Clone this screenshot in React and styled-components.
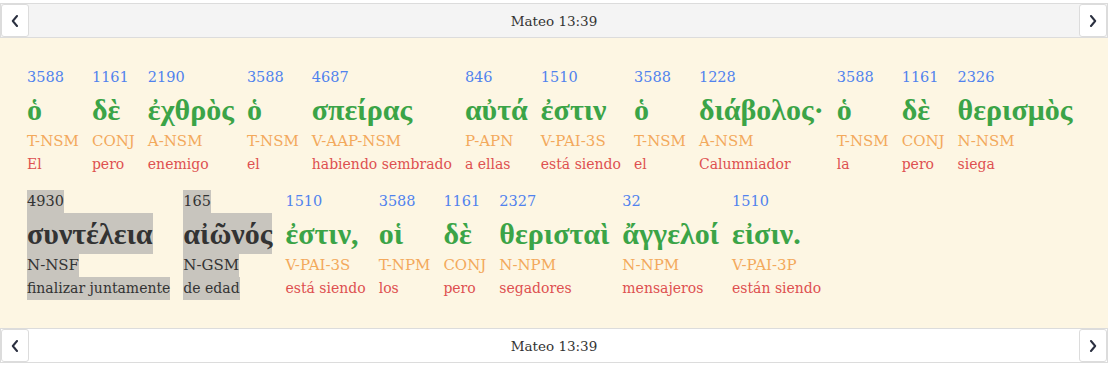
import React from 'react';
import styled, {createGlobalStyle} from 'styled-components';

const GlobalStyle = createGlobalStyle`
  html, body {
    margin: 0;
    padding: 0;
    background: #ffffff;
  }
  body {
    font-family: "DejaVu Serif", Georgia, serif;
  }
`;

const Page = styled.div`
  padding-top: 3px;
  width: 1108px;
`;

const NavBar = styled.div`
  display: flex;
  align-items: stretch;
  height: 33px;
  border: 1px solid #dcdcdc;
  background: ${({$shade}) => $shade ? '#f4f4f4' : '#ffffff'};
`;

const NavButton = styled.button`
  display: flex;
  align-items: center;
  justify-content: center;
  width: 28px;
  padding: 0;
  margin: 0;
  background: #ffffff;
  border: 1px solid #dcdcdc;
  border-radius: 3px;
  color: #2b3040;
  cursor: pointer;
`;

const NavTitle = styled.div`
  flex: 1;
  display: flex;
  align-items: center;
  justify-content: center;
  font-family: "DejaVu Serif", Georgia, serif;
  font-size: 13.5px;
  color: #333333;
`;

const Verse = styled.div`
  display: flex;
  flex-wrap: wrap;
  row-gap: 14px;
  column-gap: 13px;
  padding: 28px 24px 28px 27px;
  background: #fdf6e3;
`;

const Word = styled.div`
  display: flex;
  flex-direction: column;
  align-items: flex-start;
`;

const Line = styled.span`
  display: block;
  background: ${({$marked}) => $marked ? '#c8c5be' : 'transparent'};
  white-space: nowrap;
`;

const Strong = styled(Line)`
  height: 23px;
  line-height: 23px;
  font-size: 14.5px;
  color: ${({$marked}) => $marked ? '#333333' : '#5082ee'};
`;

const Greek = styled(Line)`
  height: 41px;
  line-height: 41px;
  font-family: "Liberation Serif", "DejaVu Serif", serif;
  font-size: 30px;
  font-weight: bold;
  color: ${({$marked}) => $marked ? '#333333' : '#3ba447'};
`;

const Morph = styled(Line)`
  height: 23px;
  line-height: 23px;
  font-size: 15px;
  color: ${({$marked}) => $marked ? '#333333' : '#f3a95c'};
`;

const Gloss = styled(Line)`
  height: 23px;
  line-height: 23px;
  font-size: 14px;
  color: ${({$marked}) => $marked ? '#333333' : '#de5050'};
`;

const Chevron = ({dir}) => (
    <svg width="8" height="12" viewBox="0 0 8 12" fill="none">
        <path
            d={dir === 'left' ? 'M6 1 L1.8 6 L6 11' : 'M2 1 L6.2 6 L2 11'}
            stroke="currentColor"
            strokeWidth="2"
            strokeLinecap="round"
            strokeLinejoin="round"
        />
    </svg>
);

const words = [
    {n: '3588', g: 'ὁ', m: 'T-NSM', t: 'El'},
    {n: '1161', g: 'δὲ', m: 'CONJ', t: 'pero'},
    {n: '2190', g: 'ἐχθρὸς', m: 'A-NSM', t: 'enemigo'},
    {n: '3588', g: 'ὁ', m: 'T-NSM', t: 'el'},
    {n: '4687', g: 'σπείρας', m: 'V-AAP-NSM', t: 'habiendo sembrado'},
    {n: '846', g: 'αὐτά', m: 'P-APN', t: 'a ellas'},
    {n: '1510', g: 'ἐστιν', m: 'V-PAI-3S', t: 'está siendo'},
    {n: '3588', g: 'ὁ', m: 'T-NSM', t: 'el'},
    {n: '1228', g: 'διάβολος·', m: 'A-NSM', t: 'Calumniador'},
    {n: '3588', g: 'ὁ', m: 'T-NSM', t: 'la'},
    {n: '1161', g: 'δὲ', m: 'CONJ', t: 'pero'},
    {n: '2326', g: 'θερισμὸς', m: 'N-NSM', t: 'siega'},
    {n: '4930', g: 'συντέλεια', m: 'N-NSF', t: 'finalizar juntamente', marked: true},
    {n: '165', g: 'αἰῶνός', m: 'N-GSM', t: 'de edad', marked: true},
    {n: '1510', g: 'ἐστιν,', m: 'V-PAI-3S', t: 'está siendo'},
    {n: '3588', g: 'οἱ', m: 'T-NPM', t: 'los'},
    {n: '1161', g: 'δὲ', m: 'CONJ', t: 'pero'},
    {n: '2327', g: 'θερισταὶ', m: 'N-NPM', t: 'segadores'},
    {n: '32', g: 'ἄγγελοί', m: 'N-NPM', t: 'mensajeros'},
    {n: '1510', g: 'εἰσιν.', m: 'V-PAI-3P', t: 'están siendo'},
];

const Navigation = ({shade}) => (
    <NavBar $shade={shade}>
        <NavButton aria-label="anterior"><Chevron dir="left"/></NavButton>
        <NavTitle>Mateo 13:39</NavTitle>
        <NavButton aria-label="siguiente"><Chevron dir="right"/></NavButton>
    </NavBar>
);

const App = () => (
    <Page>
        <GlobalStyle/>
        <Navigation shade/>
        <Verse>
            {words.map((w, i) => (
                <Word key={i}>
                    <Strong $marked={w.marked}>{w.n}</Strong>
                    <Greek $marked={w.marked}>{w.g}</Greek>
                    <Morph $marked={w.marked}>{w.m}</Morph>
                    <Gloss $marked={w.marked}>{w.t}</Gloss>
                </Word>
            ))}
        </Verse>
        <Navigation/>
    </Page>
);

export default App;
